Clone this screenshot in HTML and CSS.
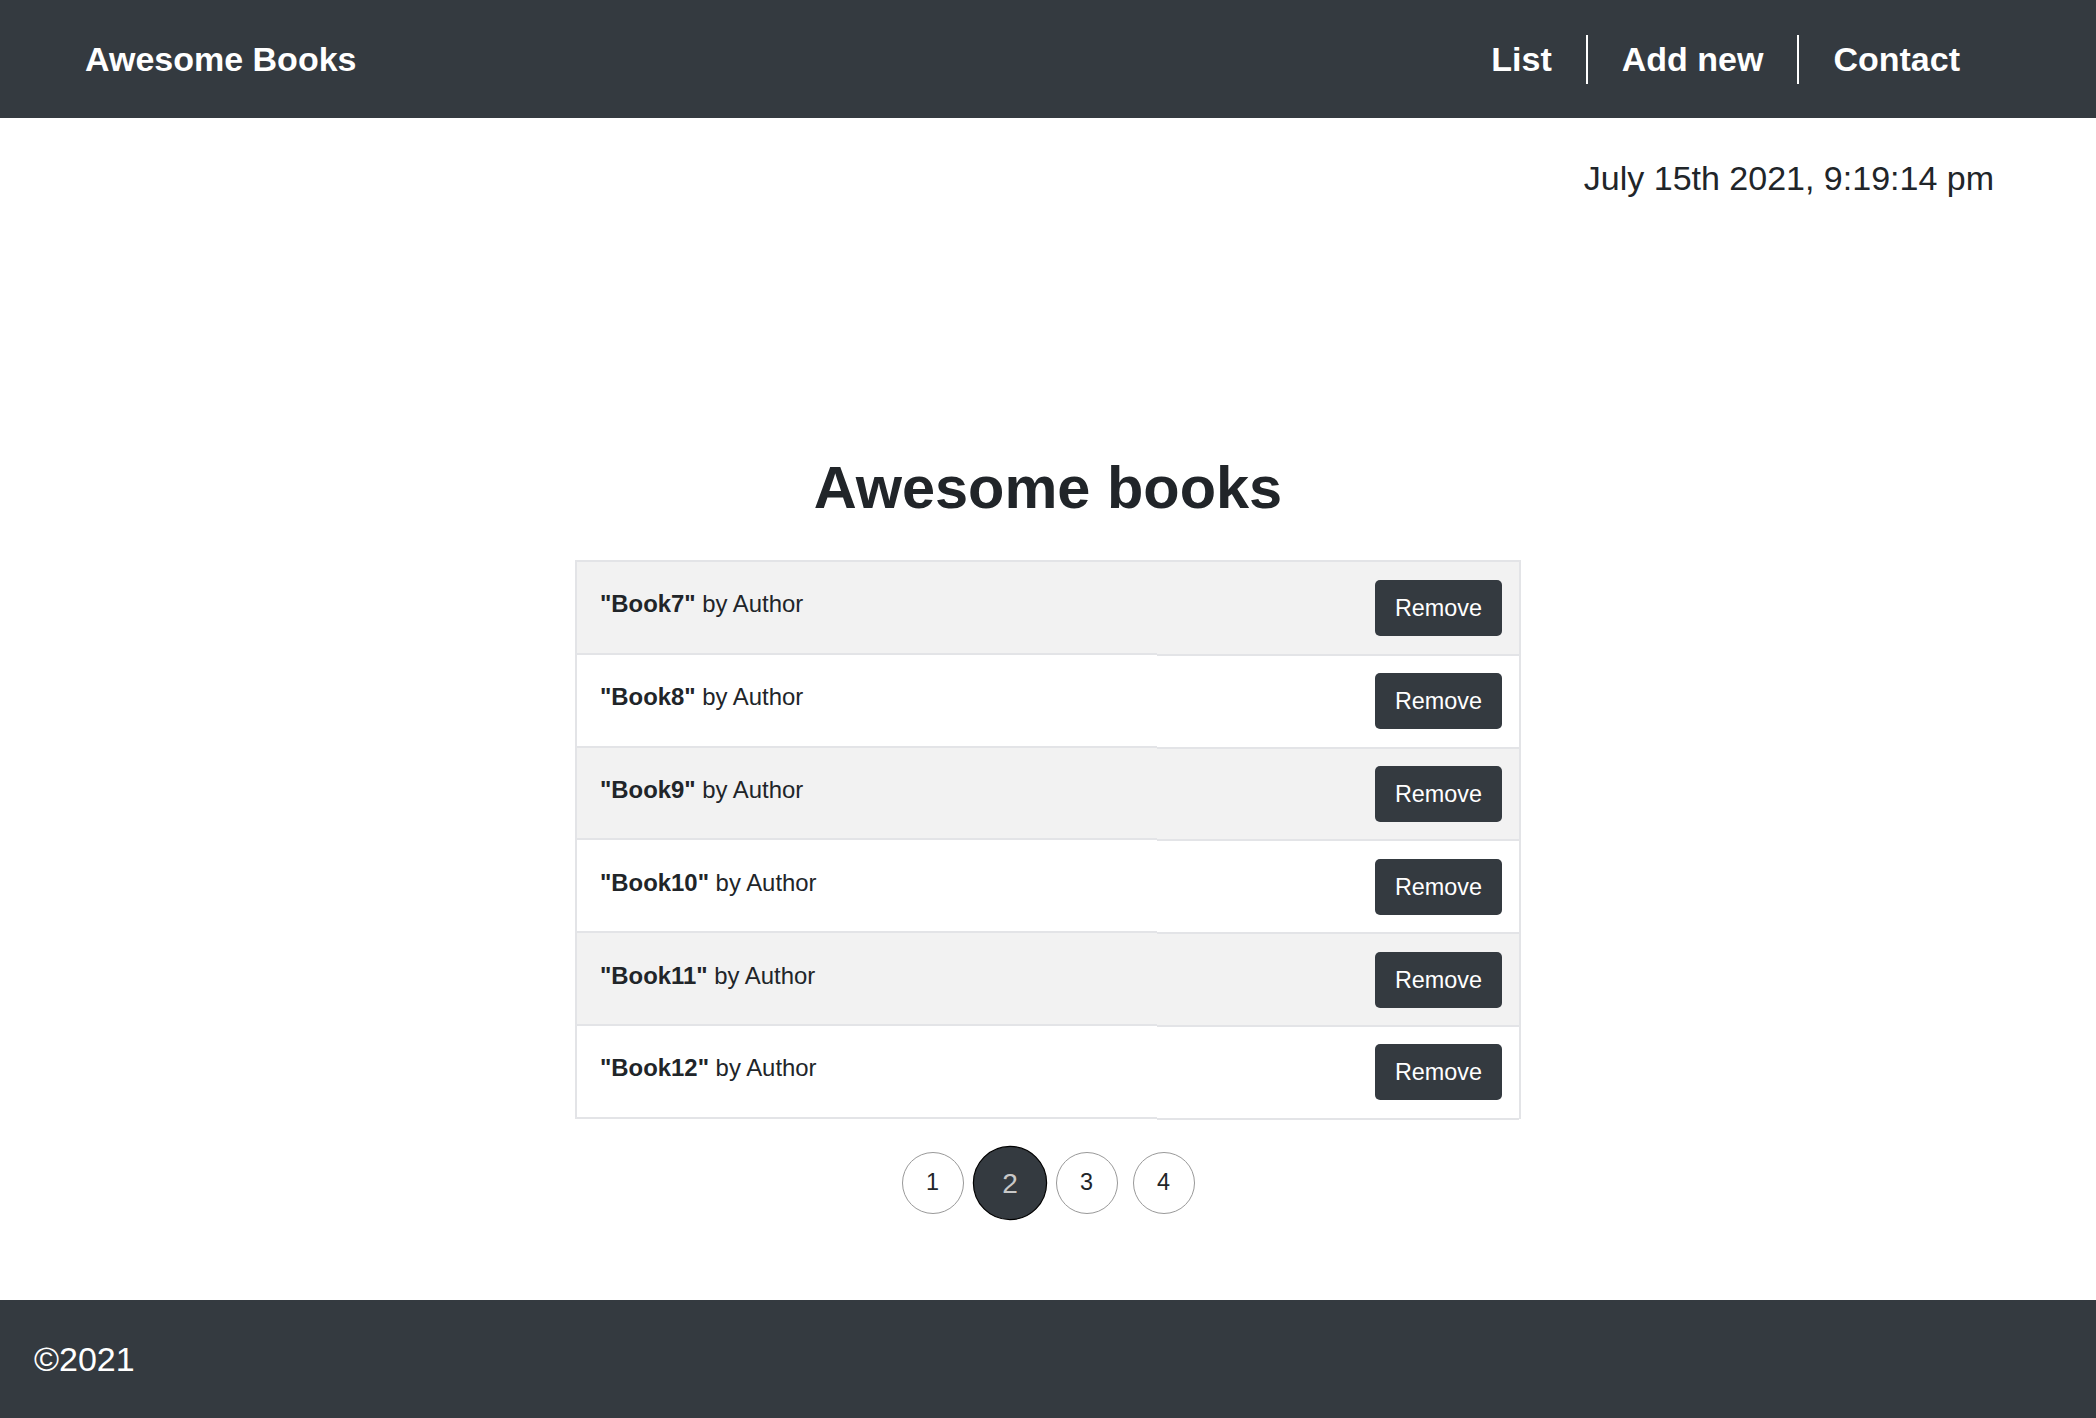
FILE: index.html
```html
<!DOCTYPE html>
<html lang="en">
<head>
<meta charset="utf-8">
<title>Awesome Books</title>
<link rel="stylesheet" href="styles.css">
</head>
<body>
<header class="topbar">
  <a class="brand" href="#">Awesome Books</a>
  <ul class="nav">
    <li class="nav-item"><a href="#">List</a></li>
    <li class="nav-item"><a href="#">Add new</a></li>
    <li class="nav-item"><a href="#">Contact</a></li>
  </ul>
</header>
<main class="content">
  <p class="date">July 15th 2021, 9:19:14 pm</p>
  <h1 class="title">Awesome books</h1>
  <ul class="books">
    <li class="book"><div class="book-cell"><span class="book-text"><b>"Book7"</b> by Author</span></div><div class="book-action"><button class="btn">Remove</button></div></li>
    <li class="book"><div class="book-cell"><span class="book-text"><b>"Book8"</b> by Author</span></div><div class="book-action"><button class="btn">Remove</button></div></li>
    <li class="book"><div class="book-cell"><span class="book-text"><b>"Book9"</b> by Author</span></div><div class="book-action"><button class="btn">Remove</button></div></li>
    <li class="book"><div class="book-cell"><span class="book-text"><b>"Book10"</b> by Author</span></div><div class="book-action"><button class="btn">Remove</button></div></li>
    <li class="book"><div class="book-cell"><span class="book-text"><b>"Book11"</b> by Author</span></div><div class="book-action"><button class="btn">Remove</button></div></li>
    <li class="book"><div class="book-cell"><span class="book-text"><b>"Book12"</b> by Author</span></div><div class="book-action"><button class="btn">Remove</button></div></li>
  </ul>
  <div class="pages">
    <button class="page">1</button>
    <button class="page active">2</button>
    <button class="page">3</button>
    <button class="page">4</button>
  </div>
</main>
<footer class="footer">©2021</footer>
</body>
</html>
```
FILE: styles.css
```css
* { box-sizing: border-box; }
html, body { margin: 0; padding: 0; }
body {
  font-family: "Liberation Sans", Arial, sans-serif;
  color: #212529;
  background: #fff;
  min-height: 100vh;
  display: flex;
  flex-direction: column;
}
.topbar {
  height: 118px;
  flex: none;
  background: #343a40;
  display: flex;
  align-items: center;
  justify-content: space-between;
  padding: 0 102px 0 85px;
}
.brand {
  color: #fff;
  text-decoration: none;
  font-weight: bold;
  font-size: 34px;
}
.nav {
  list-style: none;
  margin: 0;
  padding: 0;
  display: flex;
}
.nav-item {
  padding: 0 34px;
  line-height: 49px;
  font-size: 34px;
  font-weight: bold;
}
.nav-item + .nav-item { border-left: 2px solid #fff; }
.nav-item a { color: #fff; text-decoration: none; }
.content { display: flex; flex-direction: column; }
.date {
  margin: 40px 102px 0 0;
  text-align: right;
  font-size: 34px;
  line-height: 40px;
}
.title {
  margin: 255px 0 0;
  text-align: center;
  font-size: 59.5px;
  line-height: 70px;
  font-weight: bold;
}
.books {
  list-style: none;
  margin: 37px auto 0;
  padding: 0;
  width: 946px;
  border: 2px solid #e3e4e7;
  border-bottom: 0;
}
.book {
  height: 92.8px;
  display: flex;
  font-size: 23.9px;
}
.book:nth-child(odd) { background: #f2f2f2; }
.book-cell {
  width: 580px;
  display: flex;
  align-items: center;
  padding: 0 0 6px 23px;
  border-bottom: 2px solid #e3e4e7;
}
.book-action {
  flex: 1;
  display: flex;
  align-items: center;
  justify-content: flex-end;
  padding-right: 17px;
  margin: 1px 0 -1px;
  border-bottom: 2px solid #e3e4e7;
}
.btn {
  font-family: inherit;
  font-size: 23.4px;
  line-height: 36px;
  padding: 10px 20px;
  border: 0;
  border-radius: 5px;
  background: #343a40;
  color: #fff;
}
.pages {
  margin-top: 33px;
  display: flex;
  justify-content: center;
  gap: 15px;
}
.page {
  width: 62px;
  height: 62px;
  border-radius: 50%;
  border: 1px solid #999;
  background: #fff;
  color: #212529;
  font-family: inherit;
  font-size: 23.4px;
  padding: 0;
}
.page.active {
  transform: scale(1.2);
  background: #343a40;
  border-color: #000;
  color: #c8c8c8;
}
.footer {
  margin-top: auto;
  flex: none;
  height: 118px;
  background: #343a40;
  color: #fff;
  font-size: 34px;
  display: flex;
  align-items: center;
  padding-left: 34px;
}
```
